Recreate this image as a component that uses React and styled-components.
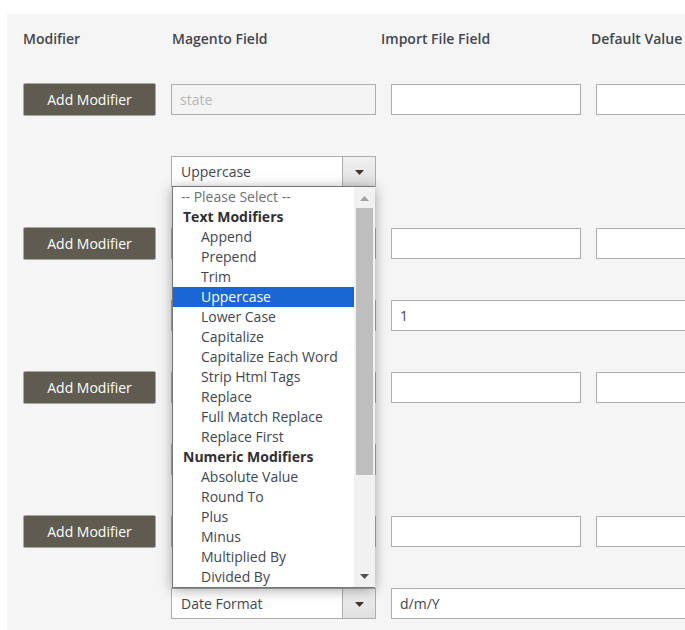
import React from "react";
import styled, { createGlobalStyle } from "styled-components";

const Global = createGlobalStyle`
  html, body { margin: 0; padding: 0; width: 685px; height: 630px; overflow: hidden; background: #fff; }
  body { font-family: "Open Sans", "Noto Sans", sans-serif; font-size: 14px; color: #303030; }
`;

const Panel = styled.div`
  margin: 14px 0 0 7px;
  height: 616px;
  width: 678px;
  box-sizing: border-box;
  padding: 15px 0 0 16px;
  background: #f5f5f5;
  overflow: hidden;
`;

const Head = styled.div`
  display: grid;
  grid-template-columns: 149px 209px 210px 200px;
  margin-bottom: 34px;
`;

const HeadCell = styled.div`
  font-weight: 600;
  line-height: 20px;
  color: #41464f;
  white-space: nowrap;
`;

const Groups = styled.div`
  display: flex;
  flex-direction: column;
  gap: 40px;
  width: 800px;
`;

const Line = styled.div`
  display: grid;
  grid-template-columns: 133px 205px 190px 190px;
  column-gap: 15px;
  align-items: center;
`;

const AddButton = styled.button`
  width: 133px;
  height: 33px;
  padding: 0;
  border: 1px solid #a9a9a2;
  border-radius: 2px;
  background: #5f5b50;
  color: #fff;
  font: 400 14px "Open Sans", sans-serif;
`;

const TextInput = styled.input`
  box-sizing: border-box;
  width: 100%;
  height: 31px;
  padding: 0 8px;
  border: 1px solid #adadad;
  border-radius: 0;
  outline: none;
  background: ${(p) => (p.disabled ? "#f4f4f4" : "#fff")};
  color: ${(p) => (p.disabled ? "#b4b4b4" : "#41464f")};
  font: 400 14px "Open Sans", sans-serif;
  -webkit-text-fill-color: ${(p) => (p.disabled ? "#b4b4b4" : "#41464f")};
  opacity: 1;
`;

const WideInput = styled(TextInput)`
  grid-column: 3 / 5;
`;

const SelectBox = styled.div`
  grid-column: 2;
  position: relative;
  box-sizing: border-box;
  height: 31px;
  display: flex;
  align-items: stretch;
  border: 1px solid #adadad;
  background: #fff;
`;

const SelectValue = styled.div`
  flex: 1;
  padding-left: 9px;
  line-height: 29px;
  color: #41464f;
`;

const SelectHandle = styled.div`
  width: 33px;
  box-sizing: border-box;
  padding-top: 2px;
  display: flex;
  align-items: center;
  justify-content: center;
  border-left: 1px solid #adadad;
  background: linear-gradient(#f0f0f0, #e0e0e0);
`;

const Caret = styled.svg`
  display: block;
  width: ${(p) => p.$w}px;
  height: ${(p) => p.$h}px;
  fill: ${(p) => p.$color};
`;

const Dropdown = styled.div`
  position: absolute;
  z-index: 10;
  top: 29px;
  left: 0;
  width: 203px;
  height: 402px;
  box-sizing: border-box;
  display: flex;
  background: #fff;
  border: 1px solid #767676;
  border-right: none;
  box-shadow: 0 2px 12px rgba(0, 0, 0, 0.35);
  overflow: hidden;
`;

const OptionList = styled.div`
  width: 181px;
  flex: none;
`;

const Option = styled.div`
  height: 20px;
  line-height: 20px;
  padding-left: ${(p) => p.$indent}px;
  white-space: nowrap;
  font-weight: ${(p) => (p.$group ? 700 : 400)};
  color: ${(p) => (p.$selected ? "#fff" : p.$group ? "#303030" : p.$muted ? "#6f6f6f" : "#41464f")};
  background: ${(p) => (p.$selected ? "#1a66d4" : "transparent")};
`;

const Scrollbar = styled.div`
  flex: 1;
  display: flex;
  flex-direction: column;
  background: #f1f1f1;
`;

const ScrollButton = styled.div`
  height: 21px;
  box-sizing: border-box;
  padding-top: ${(p) => p.$nudge}px;
  display: flex;
  align-items: center;
  justify-content: center;
`;

const ScrollThumb = styled.div`
  height: 267px;
  margin: 0 2px;
  background: #bebebe;
`;

const ScrollFill = styled.div`
  flex: 1;
`;

const Down = ({ w, h, color }) => (
  <Caret $w={w} $h={h} $color={color} viewBox="0 0 10 6" preserveAspectRatio="none">
    <path d="M0 0h10L5 6z" />
  </Caret>
);
const Up = ({ w, h, color }) => (
  <Caret $w={w} $h={h} $color={color} viewBox="0 0 10 6" preserveAspectRatio="none">
    <path d="M0 6h10L5 0z" />
  </Caret>
);

const options = [
  { label: "-- Please Select --", indent: 8, muted: true },
  { label: "Text Modifiers", indent: 10, group: true },
  { label: "Append" },
  { label: "Prepend" },
  { label: "Trim" },
  { label: "Uppercase", selected: true },
  { label: "Lower Case" },
  { label: "Capitalize" },
  { label: "Capitalize Each Word" },
  { label: "Strip Html Tags" },
  { label: "Replace" },
  { label: "Full Match Replace" },
  { label: "Replace First" },
  { label: "Numeric Modifiers", indent: 10, group: true },
  { label: "Absolute Value" },
  { label: "Round To" },
  { label: "Plus" },
  { label: "Minus" },
  { label: "Multiplied By" },
  { label: "Divided By" },
];

const Select = ({ value, children }) => (
  <SelectBox>
    <SelectValue>{value}</SelectValue>
    <SelectHandle>
      <Down w={9} h={5} color="#41362f" />
    </SelectHandle>
    {children}
  </SelectBox>
);

const groups = [
  { field: "state", select: "Uppercase", open: true },
  { field: "", select: "", wide: "1" },
  { field: "", select: "" },
  { field: "", select: "Date Format", wide: "d/m/Y" },
];

export default function App() {
  return (
    <>
      <Global />
      <Panel>
        <Head>
          <HeadCell>Modifier</HeadCell>
          <HeadCell>Magento Field</HeadCell>
          <HeadCell>Import File Field</HeadCell>
          <HeadCell>Default Value</HeadCell>
        </Head>
        <Groups>
          {groups.map((g, i) => (
            <React.Fragment key={i}>
              <Line>
                <AddButton>Add Modifier</AddButton>
                <TextInput disabled={i === 0} readOnly value={g.field} />
                <TextInput readOnly value="" />
                <TextInput readOnly value="" />
              </Line>
              <Line>
                <Select value={g.select}>
                  {g.open && (
                    <Dropdown>
                      <OptionList>
                        {options.map((o) => (
                          <Option
                            key={o.label}
                            $indent={o.indent ?? 28}
                            $group={o.group}
                            $muted={o.muted}
                            $selected={o.selected}
                          >
                            {o.label}
                          </Option>
                        ))}
                      </OptionList>
                      <Scrollbar>
                        <ScrollButton $nudge={2}>
                          <Up w={9} h={5} color="#a3a3a3" />
                        </ScrollButton>
                        <ScrollThumb />
                        <ScrollFill />
                        <ScrollButton $nudge={0}>
                          <Down w={9} h={5} color="#505050" />
                        </ScrollButton>
                      </Scrollbar>
                    </Dropdown>
                  )}
                </Select>
                {g.wide && <WideInput readOnly value={g.wide} />}
              </Line>
            </React.Fragment>
          ))}
        </Groups>
      </Panel>
    </>
  );
}
